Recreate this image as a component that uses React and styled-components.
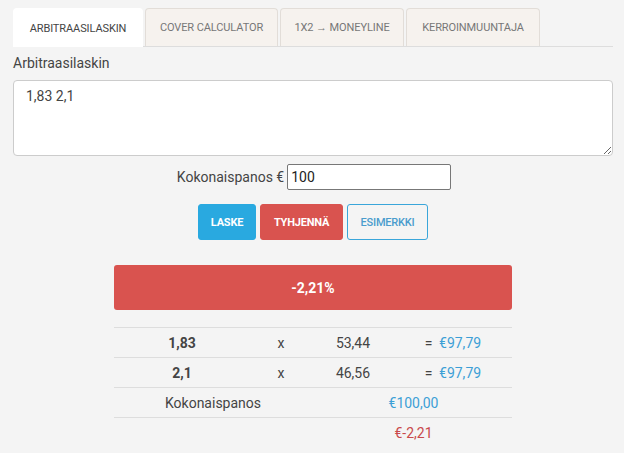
import React, { useState } from "react";
import styled, { createGlobalStyle } from "styled-components";

const GlobalStyle = createGlobalStyle`
  html, body {
    margin: 0;
    padding: 0;
    background: #f4f4f4;
  }
  body {
    font-family: Roboto, "Liberation Sans", sans-serif;
    color: #333;
  }
`;

const tabs = ["Arbitraasilaskin", "Cover calculator", "1X2 → Moneyline", "Kerroinmuuntaja"];

const rows = [
  { odds: "1,83", stake: "53,44", ret: "€97,79" },
  { odds: "2,1", stake: "46,56", ret: "€97,79" },
];

export default function App() {
  const [active, setActive] = useState(0);
  const [odds, setOdds] = useState("1,83 2,1");
  const [total, setTotal] = useState("100");

  return (
    <>
      <GlobalStyle />
      <Page>
        <TabBar>
          {tabs.map((t, i) => (
            <Tab key={t} $active={i === active} onClick={() => setActive(i)}>
              {t}
            </Tab>
          ))}
        </TabBar>

        <Label>Arbitraasilaskin</Label>
        <OddsInput value={odds} onChange={(e) => setOdds(e.target.value)} />

        <StakeRow>
          <span>Kokonaispanos €</span>
          <StakeInput value={total} onChange={(e) => setTotal(e.target.value)} />
        </StakeRow>

        <Buttons>
          <Button $variant="blue">Laske</Button>
          <Button $variant="red">Tyhjennä</Button>
          <Button $variant="outline">Esimerkki</Button>
        </Buttons>

        <Result>
          <Banner>-2,21%</Banner>
          <Table>
            {rows.map((r) => (
              <Row key={r.odds}>
                <Cell $bold>{r.odds}</Cell>
                <Cell>x</Cell>
                <Cell>{r.stake}</Cell>
                <Cell>
                  = <Money>{r.ret}</Money>
                </Cell>
              </Row>
            ))}
            <Row>
              <Cell $span={2}>Kokonaispanos</Cell>
              <Cell $span={2}>
                <Money>€100,00</Money>
              </Cell>
            </Row>
            <Row $last>
              <Cell $span={2} />
              <Cell $span={2}>
                <Money $loss>€-2,21</Money>
              </Cell>
            </Row>
          </Table>
        </Result>
      </Page>
    </>
  );
}

const Page = styled.div`
  padding: 8px 11px 0 13px;
  display: flex;
  flex-direction: column;
`;

const TabBar = styled.div`
  display: flex;
  gap: 2px;
  border-bottom: 1px solid #ddd;
  height: 38px;
`;

const Tab = styled.div`
  box-sizing: border-box;
  padding: 0 6px;
  display: flex;
  align-items: center;
  justify-content: center;
  white-space: nowrap;
  font-size: 11px;
  letter-spacing: -0.1px;
  text-transform: uppercase;
  color: ${(p) => (p.$active ? "#444" : "#777")};
  background: ${(p) => (p.$active ? "#fff" : "#f6f2ee")};
  border: 1px solid ${(p) => (p.$active ? "#fff" : "#e2ddd8")};
  border-bottom: none;
  border-radius: 4px 4px 0 0;
  margin-bottom: ${(p) => (p.$active ? "-1px" : "0")};
  height: ${(p) => (p.$active ? "39px" : "38px")};
  cursor: pointer;

  &:nth-child(1) { width: 130px; }
  &:nth-child(2) { width: 133px; }
  &:nth-child(3) { width: 124px; }
  &:nth-child(4) { width: 134px; }
`;

const Label = styled.div`
  font-size: 14px;
  color: #444;
  margin-top: 8px;
  height: 17px;
`;

const OddsInput = styled.textarea`
  margin-top: 8px;
  box-sizing: border-box;
  width: 600px;
  height: 76px;
  background: #fff;
  border: 1px solid #ccc;
  border-radius: 4px;
  padding: 7px 12px;
  font-family: Roboto, "Liberation Sans", sans-serif;
  font-size: 14px;
  color: #444;
  resize: vertical;
`;

const StakeRow = styled.div`
  display: flex;
  justify-content: center;
  align-items: center;
  gap: 3px;
  margin-top: 8px;
  font-size: 14px;
  color: #444;
  padding-left: 2px;
`;

const StakeInput = styled.input`
  box-sizing: border-box;
  width: 164px;
  height: 26px;
  border: 1px solid #777;
  border-radius: 2px;
  padding: 0 3px;
  font-family: Roboto, "Liberation Sans", sans-serif;
  font-size: 14px;
  color: #222;
`;

const palette = {
  blue: { bg: "#29a9e0", border: "#29a9e0", color: "#fff" },
  red: { bg: "#d9534f", border: "#d9534f", color: "#fff" },
  outline: { bg: "#f4f4f4", border: "#3aa6da", color: "#4a9ccd" },
};

const Buttons = styled.div`
  display: flex;
  justify-content: center;
  gap: 4px;
  margin-top: 14px;
`;

const Button = styled.button`
  height: 36px;
  box-sizing: border-box;
  padding: 0;
  border-radius: 3px;
  font-family: Roboto, "Liberation Sans", sans-serif;
  font-size: 11px;
  letter-spacing: -0.2px;
  font-weight: ${(p) => (p.$variant === "outline" ? 500 : 700)};
  text-transform: uppercase;
  background: ${(p) => palette[p.$variant].bg};
  border: 1px solid ${(p) => palette[p.$variant].border};
  color: ${(p) => palette[p.$variant].color};
  cursor: pointer;

  &:nth-child(1) { width: 58px; }
  &:nth-child(2) { width: 83px; }
  &:nth-child(3) { width: 81px; }
`;

const Result = styled.div`
  width: 398px;
  margin: 25px 0 0 101px;
`;

const Banner = styled.div`
  height: 45px;
  border-radius: 3px;
  background: #d9534f;
  color: #fff;
  font-weight: 700;
  font-size: 14px;
  display: flex;
  align-items: center;
  justify-content: center;
`;

const Table = styled.div`
  margin-top: 17px;
  border-top: 1px solid #ddd;
`;

const Row = styled.div`
  display: grid;
  grid-template-columns: 136px 62px 82px 118px;
  height: 30px;
  border-bottom: ${(p) => (p.$last ? "none" : "1px solid #ddd")};
  box-sizing: border-box;
`;

const Cell = styled.div`
  grid-column: span ${(p) => p.$span || 1};
  display: flex;
  align-items: center;
  justify-content: center;
  font-size: 14px;
  color: #444;
  font-weight: ${(p) => (p.$bold ? 700 : 400)};
  white-space: pre;
`;

const Money = styled.span`
  color: ${(p) => (p.$loss ? "#c9494b" : "#3c9fd6")};
  margin-left: 3px;
`;
